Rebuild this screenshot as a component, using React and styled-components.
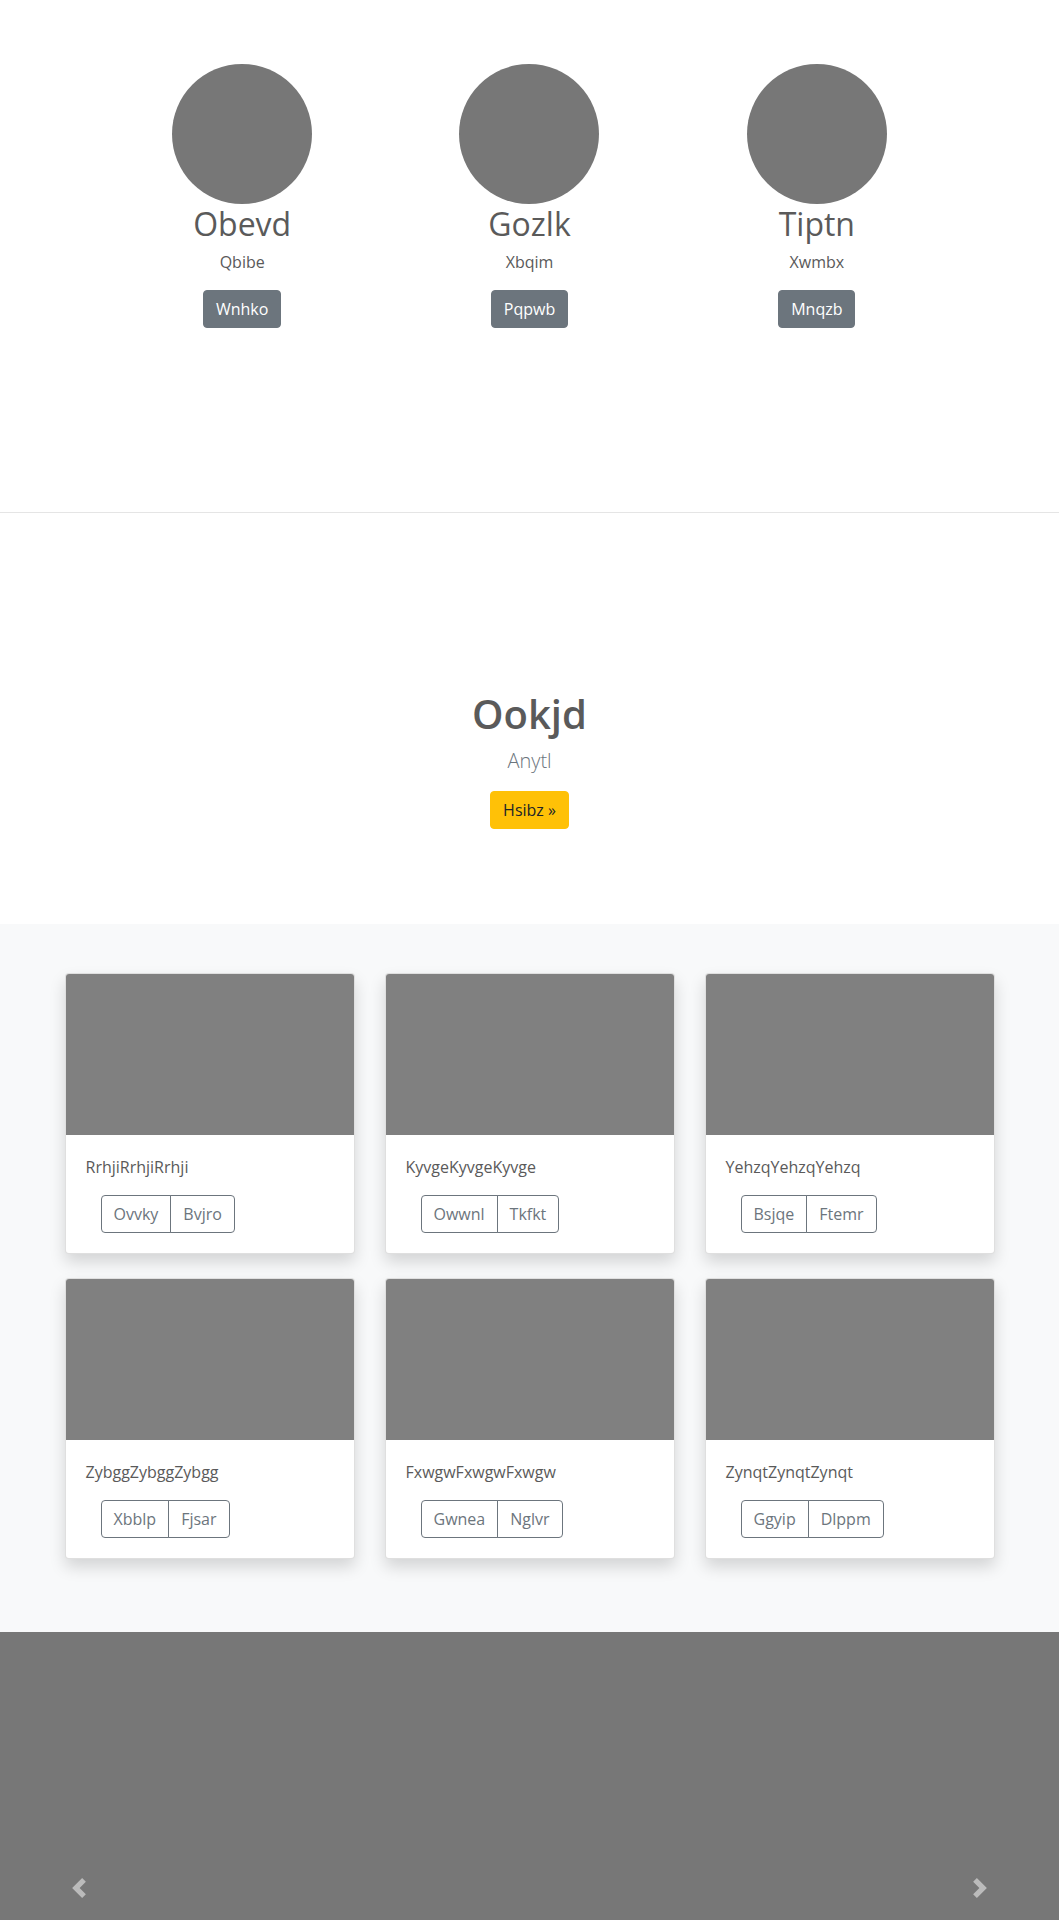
import React from 'react'
import styled, { createGlobalStyle } from 'styled-components';

const GlobalStyle = createGlobalStyle`
body{
    margin:0;
    font-family:"Open Sans", "Noto Sans", sans-serif;
    font-size:16px;
    line-height:1.5;
    color:#5a5a5a;
    background:#fff;
}
*{
    box-sizing:border-box;
}
`;

const Marketing = styled.section`
padding:64px 0 184px;
`;
const FeatureGrid = styled.div`
max-width:862px;
margin:0 auto;
display:grid;
grid-template-columns:repeat(3, 1fr);
`;
const Feature = styled.div`
display:flex;
flex-direction:column;
align-items:center;
text-align:center;
`;
const Avatar = styled.div`
width:140px;
height:140px;
border-radius:50%;
background:#777;
`;
const FeatureName = styled.h2`
margin:1px 0 7px;
font-size:32px;
font-weight:400;
line-height:1.2;
`;
const FeatureText = styled.p`
margin:0 0 16px;
`;
const Button = styled.a`
display:inline-block;
padding:6px 12px;
font-size:16px;
line-height:24px;
border:1px solid ${p => p.$bg};
border-radius:4px;
background:${p => p.$bg};
color:${p => p.$color};
text-decoration:none;
cursor:pointer;
`;

const Divider = styled.hr`
margin:0;
border:0;
border-top:1px solid rgba(0,0,0,.1);
`;

const Hero = styled.section`
padding:177px 0 95px;
text-align:center;
`;
const HeroTitle = styled.h1`
margin:0 0 8px;
font-size:40px;
font-weight:600;
line-height:1.2;
`;
const HeroLead = styled.p`
margin:0 0 15px;
font-size:20px;
font-weight:300;
line-height:30px;
color:#6c757d;
`;

const Album = styled.section`
background:#f8f9fa;
padding:49px 0 73px;
`;
const CardGrid = styled.div`
max-width:960px;
margin:0 auto;
padding:0 15px;
display:grid;
grid-template-columns:repeat(3, 1fr);
column-gap:30px;
row-gap:24px;
`;
const Card = styled.div`
background:#fff;
border:1px solid rgba(0,0,0,.125);
border-radius:4px;
overflow:hidden;
box-shadow:0 8px 16px rgba(0,0,0,.15);
`;
const CardImage = styled.div`
height:161px;
background:#808080;
`;
const CardBody = styled.div`
padding:20px;
`;
const CardText = styled.p`
margin:0 0 16px;
`;
const BtnGroup = styled.div`
display:inline-flex;
margin-left:15px;
`;
const GroupButton = styled.button`
font-family:inherit;
font-size:16px;
line-height:24px;
padding:6px 12px;
background:transparent;
color:#6c757d;
border:1px solid #6c757d;
border-radius:0;
cursor:pointer;

&:first-child{
    border-radius:4px 0 0 4px;
}
&:last-child{
    margin-left:-1px;
    border-radius:0 4px 4px 0;
}
`;

const Carousel = styled.section`
position:relative;
height:512px;
background:#777;
overflow:hidden;
`;
const Control = styled.a`
position:absolute;
top:0;
bottom:0;
${p => (p.$side === 'left' ? 'left:0;' : 'right:0;')}
width:15%;
display:flex;
align-items:center;
justify-content:center;
opacity:.5;
`;
const Caption = styled.div`
position:absolute;
left:15%;
right:15%;
bottom:48px;
padding:20px 0;
color:#fff;
text-align:left;
`;
const CaptionTitle = styled.h1`
margin:0 0 8px;
font-size:40px;
font-weight:600;
line-height:1.2;
`;
const CaptionText = styled.p`
margin:0 0 16px;
`;

const features = [
    { name: 'Obevd', text: 'Qbibe', action: 'Wnhko' },
    { name: 'Gozlk', text: 'Xbqim', action: 'Pqpwb' },
    { name: 'Tiptn', text: 'Xwmbx', action: 'Mnqzb' },
];

const cards = [
    { text: 'RrhjiRrhjiRrhji', a: 'Ovvky', b: 'Bvjro' },
    { text: 'KyvgeKyvgeKyvge', a: 'Owwnl', b: 'Tkfkt' },
    { text: 'YehzqYehzqYehzq', a: 'Bsjqe', b: 'Ftemr' },
    { text: 'ZybggZybggZybgg', a: 'Xbblp', b: 'Fjsar' },
    { text: 'FxwgwFxwgwFxwgw', a: 'Gwnea', b: 'Nglvr' },
    { text: 'ZynqtZynqtZynqt', a: 'Ggyip', b: 'Dlppm' },
];

const Chevron = ({ dir }) => (
    <svg width="20" height="20" viewBox="0 0 8 8" fill="#fff">
        {dir === 'left'
            ? <path d="M5.25 0l-4 4 4 4 1.5-1.5L4.25 4l2.5-2.5L5.25 0z" />
            : <path d="M2.75 0l-1.5 1.5L3.75 4l-2.5 2.5L2.75 8l4-4-4-4z" />}
    </svg>
);

export default function App() {
    return (
        <>
            <GlobalStyle />
            <Marketing>
                <FeatureGrid>
                    {features.map(f => (
                        <Feature key={f.name}>
                            <Avatar />
                            <FeatureName>{f.name}</FeatureName>
                            <FeatureText>{f.text}</FeatureText>
                            <Button $bg="#6c757d" $color="#fff">{f.action}</Button>
                        </Feature>
                    ))}
                </FeatureGrid>
            </Marketing>
            <Divider />
            <Hero>
                <HeroTitle>Ookjd</HeroTitle>
                <HeroLead>Anytl</HeroLead>
                <Button $bg="#ffc107" $color="#212529">Hsibz »</Button>
            </Hero>
            <Album>
                <CardGrid>
                    {cards.map(c => (
                        <Card key={c.text}>
                            <CardImage />
                            <CardBody>
                                <CardText>{c.text}</CardText>
                                <BtnGroup>
                                    <GroupButton>{c.a}</GroupButton>
                                    <GroupButton>{c.b}</GroupButton>
                                </BtnGroup>
                            </CardBody>
                        </Card>
                    ))}
                </CardGrid>
            </Album>
            <Carousel>
                <Control $side="left"><Chevron dir="left" /></Control>
                <Control $side="right"><Chevron dir="right" /></Control>
                <Caption>
                    <CaptionTitle>Ozmwq</CaptionTitle>
                    <CaptionText>Vtrla</CaptionText>
                    <Button $bg="#007bff" $color="#fff">Kpnse</Button>
                </Caption>
            </Carousel>
        </>
    )
}
